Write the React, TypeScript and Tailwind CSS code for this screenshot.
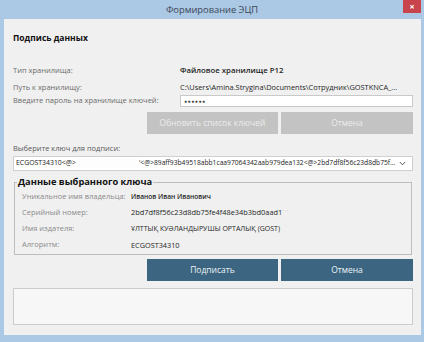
import React from "react";

interface RowProps {
    label: string;
    value: React.ReactNode;
    valueClass?: string;
}

function InfoRow(props: RowProps) {
    return (
        <div className="flex items-center h-[17px]">
            <span className="w-[167px] shrink-0 text-[7.5px] text-[#6b6b6b] whitespace-nowrap">{props.label}</span>
            <span className={"text-[#1e1e1e] whitespace-nowrap " + (props.valueClass ?? "text-[7.5px]")}>{props.value}</span>
        </div>
    );
}

function KeyRow(props: RowProps) {
    return (
        <div className="flex items-center h-[16px]">
            <span className="w-[109px] shrink-0 text-[7.5px] text-[#8a8a8a] whitespace-nowrap">{props.label}</span>
            <span className={"text-[#1e1e1e] whitespace-nowrap " + (props.valueClass ?? "text-[7.3px]")}>{props.value}</span>
        </div>
    );
}

function App() {
    return (
        <div className="w-[424px] h-[342px] bg-[#abc8e5] flex flex-col font-['Open_Sans','Noto_Sans',sans-serif] overflow-hidden">
            <div className="relative h-[19px] shrink-0 flex items-center justify-center">
                <span className="text-[9.3px] text-[#3a4654]">Формирование ЭЦП</span>
                <div className="absolute right-[3px] top-0 w-[18px] h-[13px] bg-[#c8434b] flex items-center justify-center">
                    <span className="text-[9px] leading-none text-white font-bold">×</span>
                </div>
            </div>

            <div className="flex-1 ml-[4px] mr-[3px] mb-[7px] bg-[#f0f0f0] pl-[9px] pr-[8px] flex flex-col">
                <div className="mt-[13px] h-[12px] flex items-center text-[8.5px] font-bold text-[#111]">Подпись данных</div>

                <div className="mt-[18px]">
                    <InfoRow label="Тип хранилища:" value="Файловое хранилище P12" valueClass="text-[7.8px] font-semibold" />
                    <InfoRow label="Путь к хранилищу:" value="C:\Users\Amina.Strygina\Documents\Сотрудник\GOSTKNCA_..." valueClass="text-[7.4px]" />
                </div>

                <div className="flex items-center h-[12px] mt-[-1px]">
                    <span className="w-[167px] shrink-0 text-[7.5px] text-[#6b6b6b] whitespace-nowrap">Введите пароль на хранилище ключей:</span>
                    <div className="flex-1 h-[12px] bg-white border border-[#c9c9c9] flex items-center px-[3px]">
                        <span className="text-[5px] tracking-[0.6px] text-[#444] leading-none">●●●●●●</span>
                    </div>
                </div>

                <div className="flex justify-end gap-[3px] mt-[5px]">
                    <button className="w-[131px] h-[22px] bg-[#c3c3c3] text-[8.5px] text-[#ececec]">Обновить список ключей</button>
                    <button className="w-[132px] h-[22px] bg-[#c3c3c3] text-[8.5px] text-[#ececec]">Отмена</button>
                </div>

                <div className="mt-[8px] h-[13px] flex items-center text-[7.5px] text-[#5a5a5a] whitespace-nowrap">Выберите ключ для подписи:</div>
                <div className="mt-[1px] h-[15px] bg-white border border-[#cfcfcf] flex items-center pl-[2px] pr-[6px] overflow-hidden">
                    <span className="text-[6.9px] text-[#222] whitespace-nowrap">ECGOST34310&lt;@&gt;</span>
                    <span className="w-[63px] shrink-0 h-[9px] bg-[#fdfdfd]" />
                    <span className="text-[6.7px] text-[#222] whitespace-nowrap">'&lt;@&gt;89aff93b49518abb1caa97064342aab979dea132&lt;@&gt;2bd7df8f56c23d8db75f...</span>
                    <span className="flex-1" />
                    <svg width="7" height="5" viewBox="0 0 7 5" className="shrink-0">
                        <path d="M0.8 1 L3.5 3.8 L6.2 1" fill="none" stroke="#555" strokeWidth="1" />
                    </svg>
                </div>

                <fieldset className="mt-[5px] ml-[1px] mr-[1px] border border-[#bdbdbd] pb-[1px]">
                    <legend className="ml-[2px] px-[1px] h-[12px] text-[9.3px] font-bold text-[#111] leading-[12px]">Данные выбранного ключа</legend>
                    <div className="pl-[7px] mt-[1px]">
                        <KeyRow label="Уникальное имя владельца:" value="Иванов Иван Иванович" valueClass="text-[6.6px] font-semibold" />
                        <KeyRow label="Серийный номер:" value={<span>2bd7df8f56c23d8db75fe4f48e34b3bd0aad1<span className="text-[#c8c8c8]">` `</span></span>} valueClass="text-[7.4px]" />
                        <KeyRow label="Имя издателя:" value="ҰЛТТЫҚ КУӘЛАНДЫРУШЫ ОРТАЛЫҚ (GOST)" valueClass="text-[7px]" />
                        <KeyRow label="Алгоритм:" value="ECGOST34310" valueClass="text-[7.3px]" />
                    </div>
                </fieldset>

                <div className="flex justify-end gap-[3px] mt-[4px]">
                    <button className="w-[131px] h-[22px] bg-[#3b6581] text-[8.5px] text-[#eef3f6]">Подписать</button>
                    <button className="w-[132px] h-[22px] bg-[#3b6581] text-[8.5px] text-[#eef3f6]">Отмена</button>
                </div>

                <div className="mt-[7px] h-[37px] bg-[#f7f7f7] border border-[#cccccc]" />
            </div>
        </div>
    );
}

export default App;
